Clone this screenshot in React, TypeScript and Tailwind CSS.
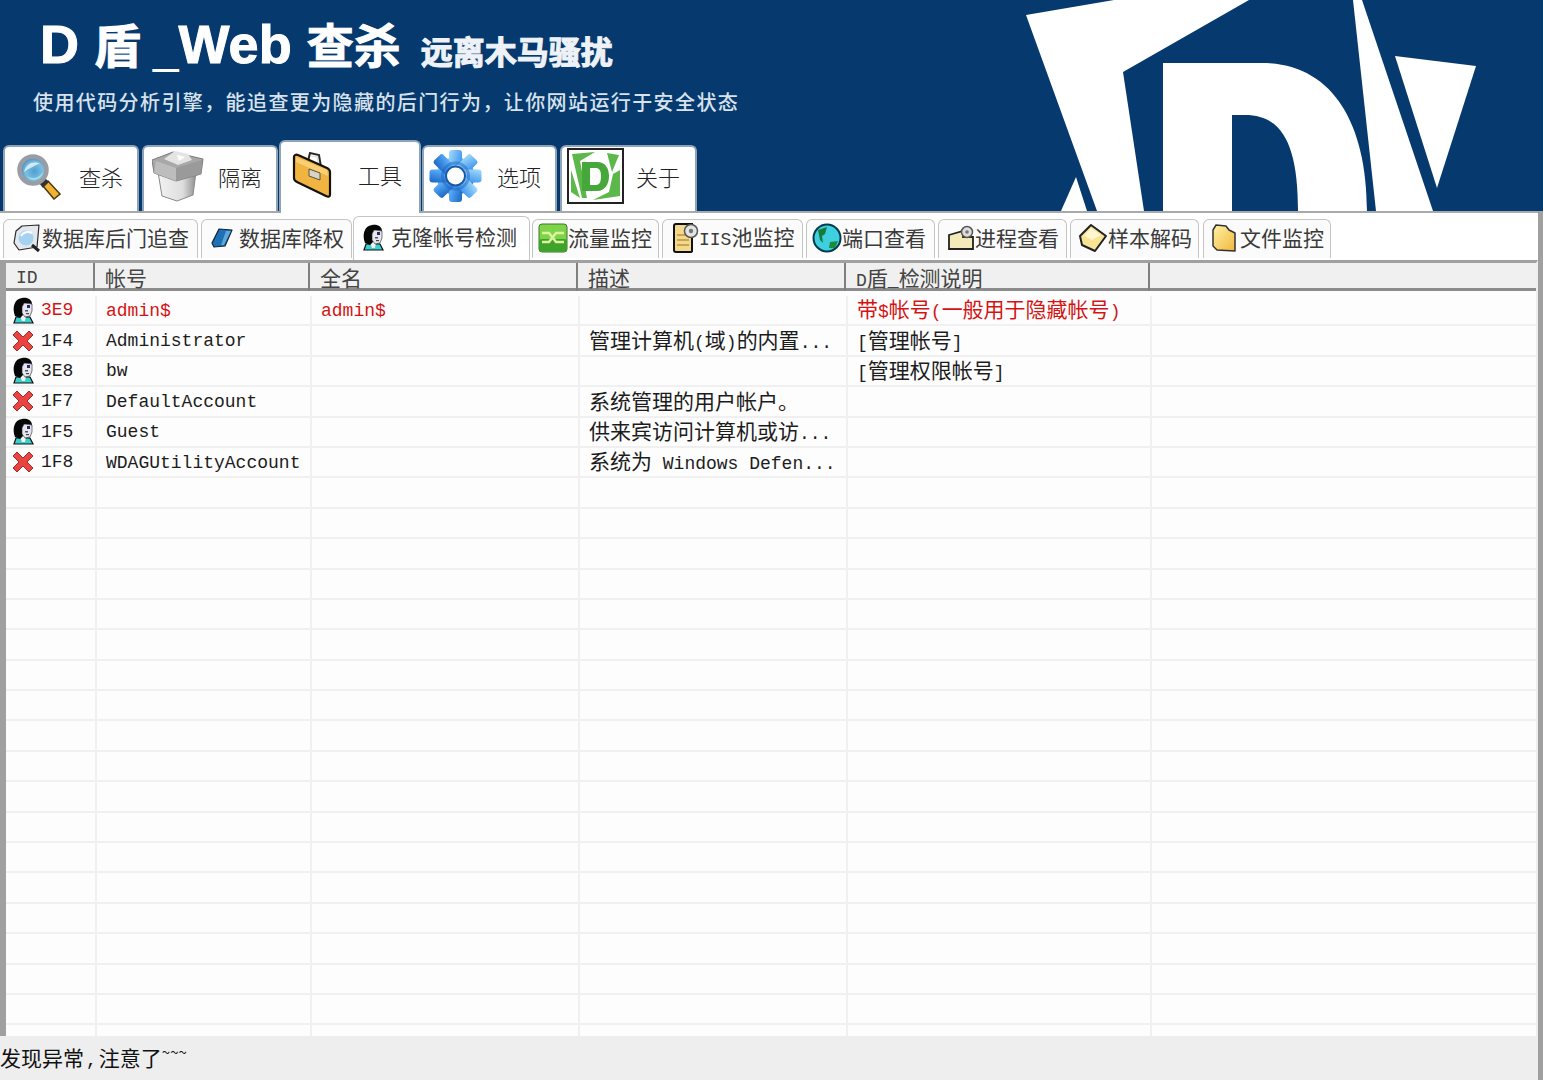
import { ReactNode } from 'react';

const cjk = "font-['Noto_Sans_CJK_SC',sans-serif]";
const mono = "font-['Liberation_Mono','Noto_Sans_CJK_SC',monospace]";

// ---- icons ----
function Magnifier() {
  return (
    <svg width="44" height="47" viewBox="0 0 44 47">
      <defs>
        <radialGradient id="lens" cx="55%" cy="55%" r="60%">
          <stop offset="0%" stopColor="#4f9fd0" />
          <stop offset="55%" stopColor="#7fc0e0" />
          <stop offset="100%" stopColor="#2f6fb4" />
        </radialGradient>
      </defs>
      <path d="M26 33 L31 28 L43 41 L37 46 Z" fill="#f2b233" stroke="#4a3a12" strokeWidth="1.5" />
      <path d="M22 30 L28 25 L32 29 L26 35 Z" fill="#333" />
      <circle cx="16" cy="17" r="13.5" fill="url(#lens)" stroke="#9a9ea4" strokeWidth="4.5" />
      <path d="M7 19 C9 11 15 8 23 10 C18 13 12 15 7 19 Z" fill="#dff2fb" opacity=".85" />
      <path d="M10 23 C16 27 22 25 26 19 C25 27 14 30 10 23 Z" fill="#9fdcec" />
    </svg>
  );
}

function Bin() {
  return (
    <svg width="52" height="52" viewBox="0 0 52 52">
      <defs>
        <linearGradient id="bin" x1="0" x2="1">
          <stop offset="0%" stopColor="#f2f2f2" />
          <stop offset="65%" stopColor="#dedede" />
          <stop offset="100%" stopColor="#8f8f8f" />
        </linearGradient>
      </defs>
      <path d="M6 22 L44 22 L41 45 L25 51 L10 46 Z" fill="url(#bin)" stroke="#8a8a8a" />
      <path d="M0 10 L21 2 L51 9 L49 24 L24 31 L2 23 Z" fill="#a8a8a8" stroke="#7c7c7c" />
      <path d="M4 11 L24 18 L24 31 L2 23 Z" fill="#bdbdbd" />
      <path d="M24 18 L50 10 L49 24 L24 31 Z" fill="#9a9a9a" />
      <path d="M12 9 L23 1 L36 4 L40 10 L26 15 Z" fill="#e4e4e4" />
      <path d="M25 5 L33 7 L27 11 Z" fill="#fff" />
    </svg>
  );
}

function Case() {
  return (
    <svg width="40" height="46" viewBox="0 0 40 46">
      <path d="M16 9 L18 1 L27 3 L29 15" fill="none" stroke="#2a2a22" strokeWidth="2" />
      <path d="M19 4 L25 5 L27 14" fill="none" stroke="#ddd" strokeWidth="1.2" />
      <path d="M2 5 C2 3 4 2 6 3 L35 16 C37 17 38 18 38 20 V43 C38 45 36 45 34 44 L5 30 C3 29 2 28 2 26 Z" fill="#f1b441" stroke="#15120a" strokeWidth="2.2" strokeLinejoin="round" />
      <path d="M4 5 L35 18 L36 24 L4 10 Z" fill="#f9cf74" />
      <path d="M17 17 L28 21 L28 28 L17 24 Z" fill="#d8d4c8" stroke="#5b5440" />
    </svg>
  );
}

function Gear() {
  return (
    <svg width="55" height="52" viewBox="0 0 55 52">
      <defs>
        <linearGradient id="gear" x1="0" y1="0" x2="1" y2="1">
          <stop offset="0%" stopColor="#a6dcfa" />
          <stop offset="55%" stopColor="#4a9df0" />
          <stop offset="100%" stopColor="#1a64c0" />
        </linearGradient>
      </defs>
      <g fill="url(#gear)">
        <circle cx="27.5" cy="26" r="19" />
        <rect x="21" y="0" width="13" height="52" rx="3" />
        <rect x="21" y="0" width="13" height="52" rx="3" transform="rotate(45 27.5 26)" />
        <rect x="21" y="0" width="13" height="52" rx="3" transform="rotate(90 27.5 26)" />
        <rect x="21" y="0" width="13" height="52" rx="3" transform="rotate(135 27.5 26)" />
      </g>
      <circle cx="27.5" cy="26" r="13" fill="none" stroke="#1c62bc" strokeWidth="3" opacity=".45" />
      <circle cx="27.5" cy="26" r="9.5" fill="#fff" stroke="#175aa8" strokeWidth="2" />
    </svg>
  );
}

function AboutLogo() {
  return (
    <svg width="57" height="56" viewBox="0 0 57 56">
      <rect x="1" y="1" width="55" height="54" fill="#fff" stroke="#222" strokeWidth="2" />
      <g fill="#5cb84a">
        <path d="M5 6 L28 4 L13 13 L20 50 L15 50 Z" />
        <path d="M4 22 L13 50 L4 44 Z" />
        <path d="M40 5 L52 7 L45 24 Z" />
        <path d="M46 26 L53 22 L53 48 L26 52 L42 44 Z" />
      </g>
      <path d="M15 14 H30 C39 14 42 21 42 28 C42 36 38 43 30 43 H15 Z M23 20 V37 H29 C33 37 34 33 34 28 C34 24 33 20 29 20 Z" fill="#46a83a" fillRule="evenodd" />
    </svg>
  );
}

function DbSearch() {
  return (
    <svg width="30" height="30" viewBox="0 0 30 30">
      <path d="M4 8 L10 3 L27 2 L25 24 L7 27 L2 20 Z" fill="#e6e8ee" stroke="#2a2a2a" strokeWidth="1.2" strokeLinejoin="round" />
      <circle cx="14" cy="15" r="8.5" fill="#a6d2f2" stroke="#dfe8f0" strokeWidth="2" />
      <path d="M9 13 C11 9 16 8 20 10" stroke="#fff" strokeWidth="2" fill="none" />
      <path d="M20 22 L27 28" stroke="#222" strokeWidth="3" />
    </svg>
  );
}

function Book() {
  return (
    <svg width="24" height="24" viewBox="0 0 24 24">
      <path d="M9 3 L22 4 L15 20 L4 21 L2 17 Z" fill="#1f6fb4" stroke="#10243a" strokeWidth="1.2" strokeLinejoin="round" />
      <path d="M16 5 L21 5 L14 19 L11 19 Z" fill="#5ba8de" />
    </svg>
  );
}

function UserFace() {
  return (
    <svg width="22" height="27" viewBox="0 0 22 27">
      <path d="M2 26 L4 20 L18 20 L21 26 Z" fill="#3ad0cc" stroke="#101010" strokeWidth="1.2" />
      <path d="M8 19 L14 19 L13 24 L10 24 Z" fill="#f2f2f2" />
      <path d="M3 19 C0 11 2 2 10 1 C16 0 20 3 20 7 L13 6 L10 10 L11 18 L8 21 Z" fill="#070707" />
      <path d="M12 6 L20 7 L20 14 L18 19 L13 20 L10 16 L10 10 Z" fill="#e6e6ee" stroke="#222" strokeWidth=".6" />
      <rect x="15" y="8" width="3" height="3" fill="#2a2a6a" />
      <rect x="13" y="13" width="3" height="1.5" fill="#55556a" />
      <rect x="14" y="16" width="3" height="1.2" fill="#444" />
    </svg>
  );
}

function RedCross() {
  return (
    <svg width="22" height="22" viewBox="0 0 22 22">
      <path d="M1 5 L5 1 L11 7 L17 1 L21 5 L15 11 L21 17 L17 21 L11 15 L5 21 L1 17 L7 11 Z" fill="#e84540" stroke="#a82a2a" strokeWidth="1" />
    </svg>
  );
}

function Flow() {
  return (
    <svg width="30" height="30" viewBox="0 0 30 30">
      <rect x="1" y="1" width="28" height="28" rx="3" fill="#7ed448" stroke="#3a7a28" />
      <rect x="1" y="16" width="28" height="13" rx="3" fill="#3fa22a" />
      <path d="M4 10 H11 L18 19 H26 M4 19 H11 L18 10 H26" fill="none" stroke="#dcf2a0" strokeWidth="2.5" />
    </svg>
  );
}

function DocGear() {
  return (
    <svg width="28" height="30" viewBox="0 0 28 30">
      <path d="M3 3 C3 2 4 1 5 1 H21 V28 C21 29 20 29 19 29 H5 C4 29 3 28 3 27 Z" fill="#f3d98c" stroke="#111" strokeWidth="2" />
      <path d="M6 12 H17 M6 17 H18 M6 22 H18" stroke="#c9a452" strokeWidth="2" />
      <circle cx="20" cy="8" r="6.5" fill="#e4e4e4" stroke="#555" strokeWidth="1.5" />
      <circle cx="20" cy="8" r="2.2" fill="#777" />
    </svg>
  );
}

function Globe() {
  return (
    <svg width="30" height="30" viewBox="0 0 30 30">
      <circle cx="15" cy="15" r="13.5" fill="#3fd0e0" stroke="#063a4c" strokeWidth="2" />
      <path d="M6 7 L15 4 L13 11 L10 13 L11 20 L8 17 Z" fill="#157a3a" />
      <path d="M18 19 L26 18 L23 25 L17 25 Z" fill="#1c8c3c" />
    </svg>
  );
}

function FolderGear() {
  return (
    <svg width="28" height="26" viewBox="0 0 28 26">
      <path d="M2 10 L16 6 V12 H26 V24 H2 Z" fill="#f4e9b8" stroke="#222" strokeWidth="1.8" />
      <circle cx="20" cy="7" r="5.5" fill="#ddd" stroke="#555" strokeWidth="1.5" />
      <circle cx="20" cy="7" r="1.8" fill="#777" />
    </svg>
  );
}

function Note() {
  return (
    <svg width="30" height="32" viewBox="0 0 30 32">
      <path d="M13 3 L28 14 L17 29 L4 23 L2 14 Z" fill="#f8e494" stroke="#222" strokeWidth="2" strokeLinejoin="round" />
      <path d="M13 6 L23 13 L14 18 L6 14 Z" fill="#fdf6cf" />
    </svg>
  );
}

function Folder() {
  return (
    <svg width="26" height="30" viewBox="0 0 26 30">
      <defs>
        <linearGradient id="fld" x1="0" y1="0" x2="1" y2="1">
          <stop offset="0%" stopColor="#fff1a8" />
          <stop offset="100%" stopColor="#f0b93a" />
        </linearGradient>
      </defs>
      <path d="M2 7 L5 2 L15 3 L18 7 L24 10 L24 28 L6 27 L2 23 Z" fill="url(#fld)" stroke="#333" strokeWidth="1.5" strokeLinejoin="round" />
    </svg>
  );
}

// mixes latin runs (mono) with chinese runs (wider) like the old GDI font does
function T({ children }: { children: string }) {
  const parts = children.match(/[\x00-\x7f]+|[^\x00-\x7f]+/g) ?? [];
  return (
    <span className="whitespace-pre">
      {parts.map((p, i) =>
        /^[\x00-\x7f]/.test(p) ? (
          <span key={i} className={`${mono} text-[18px]`}>
            {p}
          </span>
        ) : (
          <span key={i} className={`${cjk} text-[21px]`}>
            {p}
          </span>
        ),
      )}
    </span>
  );
}

// ---- data ----
const mainTabs: { label: string; icon: ReactNode; cls: string; gap: string }[] = [
  { label: '查杀', icon: <Magnifier />, cls: 'w-[136px] h-[66px] ml-[3px] pl-[12px]', gap: 'ml-[18px]' },
  { label: '隔离', icon: <Bin />, cls: 'w-[136px] h-[66px] ml-[3px] pl-[8px]', gap: 'ml-[14px]' },
  { label: '工具', icon: <Case />, cls: 'relative z-10 -mb-[2px] w-[142px] h-[73px] ml-[1px] pl-[11px]', gap: 'ml-[26px]' },
  { label: '选项', icon: <Gear />, cls: 'w-[135px] h-[66px] ml-[1px] pl-[4px]', gap: 'ml-[14px]' },
  { label: '关于', icon: <AboutLogo />, cls: 'w-[137px] h-[66px] ml-[3px] pl-[5px]', gap: 'ml-[12px]' },
];

const subTabs: { label: string; icon: ReactNode; cls: string }[] = [
  { label: '数据库后门追查', icon: <DbSearch />, cls: 'w-[195px] pl-[8px] ml-[3px]' },
  { label: '数据库降权', icon: <Book />, cls: 'w-[151px] pl-[8px] ml-[3px] gap-[5px]' },
  { label: '克隆帐号检测', icon: <UserFace />, cls: 'relative z-10 -mb-[2px] !h-[44px] w-[177px] pl-[8px] ml-[1px] gap-[7px] !bg-white' },
  { label: '流量监控', icon: <Flow />, cls: 'w-[127px] pl-[5px] ml-[2px]' },
  { label: 'IIS池监控', icon: <DocGear />, cls: 'w-[141px] pl-[8px] ml-[3px]' },
  { label: '端口查看', icon: <Globe />, cls: 'w-[129px] pl-[5px] ml-[3px]' },
  { label: '进程查看', icon: <FolderGear />, cls: 'w-[129px] pl-[8px] ml-[3px]' },
  { label: '样本解码', icon: <Note />, cls: 'w-[129px] pl-[7px] ml-[3px]' },
  { label: '文件监控', icon: <Folder />, cls: 'w-[128px] pl-[7px] ml-[4px] gap-[3px]' },
];

const headers = ['ID', '帐号', '全名', '描述', 'D盾_检测说明', ''];

const rows = [
  { id: '3E9', name: 'admin$', full: 'admin$', desc: '', note: '带$帐号(一般用于隐藏帐号)', red: true, ok: true },
  { id: '1F4', name: 'Administrator', full: '', desc: '管理计算机(域)的内置...', note: '[管理帐号]', ok: false },
  { id: '3E8', name: 'bw', full: '', desc: '', note: '[管理权限帐号]', ok: true },
  { id: '1F7', name: 'DefaultAccount', full: '', desc: '系统管理的用户帐户。', note: '', ok: false },
  { id: '1F5', name: 'Guest', full: '', desc: '供来宾访问计算机或访...', note: '', ok: true },
  { id: '1F8', name: 'WDAGUtilityAccount', full: '', desc: '系统为 Windows Defen...', note: '', ok: false },
];

const emptyRows = Array.from({ length: 19 }, (_, i) => i);

const headGrid = 'grid grid-cols-[89px_215px_268px_268px_304px_1fr]';
const bodyGrid = 'grid h-[30.4px] grid-rows-[28.4px] grid-cols-[91px_215px_268px_268px_304px_1fr] leading-[22px]';
const lineCell = 'border-r-2 border-[#f0f0f0] pl-[9px] flex items-center whitespace-nowrap';

export default function App() {
  return (
    <div className="flex h-[1080px] w-[1543px] flex-col overflow-hidden bg-white">
      {/* banner */}
      <div className="relative flex h-[211px] shrink-0 flex-col bg-[#063a6f] text-white">
        <svg className="absolute inset-0" width="1543" height="211" viewBox="0 0 1543 211">
          <g fill="#fff">
            <path d="M1026 15 L1114 0 L1249 0 L1123 72 L1144 211 L1097 211 Z" />
            <path d="M1061 211 L1076 177 L1087 211 Z" />
            <path fillRule="evenodd" d="M1163 63 H1262 C1330 63 1367 120 1367 211 H1298 C1298 150 1285 115 1245 115 H1232 V211 H1163 Z" />
            <path d="M1353 0 L1362 0 L1433 211 L1376 211 Z" />
            <path d="M1395 56 L1476 66 L1437 188 Z" />
          </g>
        </svg>
        <div className="relative ml-[40px] mt-[14px] flex h-[66px] items-end whitespace-nowrap">
          <span className="font-['Liberation_Sans','Noto_Sans_CJK_SC',sans-serif] text-[54px] leading-[66px] font-bold [-webkit-text-stroke:1px_#ffffff]">
            D <span className="text-[47px]">盾</span>{' '}
            <span className="-ml-[3px] text-[46px] font-normal [-webkit-text-stroke:0]">_</span>Web{' '}
            <span className="text-[47px]">查杀</span>
          </span>
          <span className={`${cjk} ml-[20px] text-[32px] leading-[60px] font-bold text-[#eef2f6] [-webkit-text-stroke:1px_#eef2f6]`}>远离木马骚扰</span>
        </div>
        <div className={`${cjk} relative ml-[33px] mt-[7px] text-[20px] leading-[30px] font-medium tracking-[1.4px] whitespace-nowrap text-[#d8e2ec]`}>
          {'使用代码分析引擎\uFF0C能追查更为隐藏的后门行为\uFF0C让你网站运行于安全状态'}
        </div>
        <div className="relative mt-auto flex items-end">
          {mainTabs.map((t) => (
            <div
              key={t.label}
              className={`${t.cls} flex items-center rounded-t-md border-x-2 border-t-2 border-[#8ea2b8] bg-white pb-[6px]`}
            >
              <div className="shrink-0 leading-none">{t.icon}</div>
              <span className={`${cjk} ${t.gap} text-[22px] font-light whitespace-nowrap text-[#222]`}>{t.label}</span>
            </div>
          ))}
        </div>
      </div>

      <div className="flex min-h-0 flex-1 flex-col border-r-[5px] border-[#a0a0a0]">
        {/* sub tabs */}
        <div className="flex h-[49px] shrink-0 items-end border-t-2 border-[#a9a9a9] pb-[2px]">
          {subTabs.map((t) => (
            <div
              key={t.label}
              className={`flex h-[39px] items-center rounded-t-md border-x border-t border-[#c4c4c4] bg-[#fbfbfb] pb-[3px] ${t.cls}`}
            >
              {t.icon}
              <span className="whitespace-nowrap text-[#3a3a3a]">
                <T>{t.label}</T>
              </span>
            </div>
          ))}
        </div>

        {/* table */}
        <div className="flex min-h-0 flex-1 flex-col border-t-[3px] border-r-2 border-l-[6px] border-t-[#a0a0a0] border-r-[#eeeeee] border-l-[#a0a0a0] bg-white">
          <div className={`${headGrid} h-[28px] shrink-0 border-b-[3px] border-[#8c8c8c] bg-[#f0f0f0]`}>
            {headers.map((h, i) => (
              <div
                key={i}
                className="border-r-2 border-[#808080] pt-[4px] pl-[10px] leading-[21px] whitespace-nowrap text-[#444] last:border-r-0"
              >
                <T>{h}</T>
              </div>
            ))}
          </div>
          <div className="min-h-0 flex-1 overflow-hidden bg-[#fdfdfd] pt-[5px]">
            {rows.map((r) => (
              <div
                key={r.id}
                className={`${bodyGrid} border-b-2 border-[#f0f0f0] ${r.red ? 'text-[#d41414]' : 'text-[#1c1c1c]'}`}
              >
                <div className="flex items-center border-r-2 border-[#f0f0f0] pl-[6px]">
                  <div className="flex w-[22px] justify-center">{r.ok ? <UserFace /> : <RedCross />}</div>
                  <span className={`${mono} ml-[7px] text-[18px]`}>{r.id}</span>
                </div>
                <div className={lineCell}>
                  <T>{r.name}</T>
                </div>
                <div className={lineCell}>
                  <T>{r.full}</T>
                </div>
                <div className={lineCell}>
                  <T>{r.desc}</T>
                </div>
                <div className={lineCell}>
                  <T>{r.note}</T>
                </div>
                <div />
              </div>
            ))}
            {emptyRows.map((i) => (
              <div key={i} className={`${bodyGrid} border-b-2 border-[#f0f0f0]`}>
                <div className={lineCell} />
                <div className={lineCell} />
                <div className={lineCell} />
                <div className={lineCell} />
                <div className={lineCell} />
                <div />
              </div>
            ))}
          </div>
        </div>

        {/* status bar */}
        <div className={`${cjk} flex h-[44px] shrink-0 items-center bg-[#eeeeee] text-[21px] whitespace-nowrap text-[#111]`}>
          发现异常<span className="mx-[2px]">
            <T>,</T>
          </span>
          注意了<span className="relative -top-[6px] text-[15px]">~~~</span>
        </div>
      </div>
    </div>
  );
}
